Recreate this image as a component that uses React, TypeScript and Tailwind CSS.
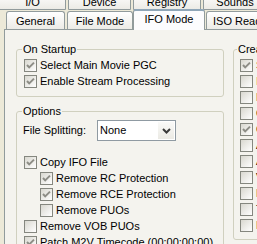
import React from "react";

function Check({ checked }: { checked?: boolean }) {
  return (
    <div className="w-[13px] h-[13px] shrink-0 border border-[#85877F] bg-linear-to-br from-[#D9D8D0] to-white">
      {checked && (
        <svg width="11" height="11" viewBox="0 0 11 11" className="block">
          <path d="M2 5 L4.2 7.4 L9 2.6" fill="none" stroke="#8D8D86" strokeWidth="2" />
        </svg>
      )}
    </div>
  );
}

function Row({ checked, label, indent }: { checked?: boolean; label: string; indent?: boolean }) {
  return (
    <div className={"flex items-center h-[13px] gap-[3px] " + (indent ? "ml-[16px]" : "")}>
      <Check checked={checked} />
      <span className="leading-[13px] whitespace-nowrap">{label}</span>
    </div>
  );
}

export default function App() {
  return (
    <div className="w-[257px] h-[244px] overflow-hidden bg-[#ECE9D8] text-[11px] text-black font-['Liberation_Sans',_Arial,_sans-serif]">
      {/* top tab row */}
      <div className="flex items-start h-[18px] mt-[-8px] ml-[-1px] gap-[2px]">
        <div className="w-[67px] h-[18px] shrink-0 border border-[#919B9C] rounded-t-[3px] bg-linear-to-b from-white to-[#ECEBE6] flex items-end justify-center pb-0 leading-[13px]">I/O</div>
        <div className="w-[63px] h-[18px] shrink-0 border border-[#919B9C] rounded-t-[3px] bg-linear-to-b from-white to-[#ECEBE6] flex items-end justify-center pb-0 leading-[13px]">Device</div>
        <div className="w-[68px] h-[18px] shrink-0 border border-[#919B9C] rounded-t-[3px] bg-linear-to-b from-white to-[#ECEBE6] flex items-end justify-center pb-0 leading-[13px]">Registry</div>
        <div className="w-[64px] h-[18px] shrink-0 border border-[#919B9C] rounded-t-[3px] bg-linear-to-b from-white to-[#ECEBE6] flex items-end justify-center pb-0 leading-[13px]">Sounds</div>
      </div>
      {/* second tab row */}
      <div className="flex items-start h-[18px] mt-[1px] ml-[6px]">
        <div className="w-[59px] h-[18px] shrink-0 border border-b-0 border-[#919B9C] rounded-t-[3px] bg-linear-to-b from-white to-[#ECEBE6] flex items-center justify-center leading-[13px] pt-[1px]">General</div>
        <div className="w-[66px] h-[18px] shrink-0 ml-[2px] border border-b-0 border-[#919B9C] rounded-t-[3px] bg-linear-to-b from-white to-[#ECEBE6] flex items-center justify-center leading-[13px] pt-[1px]">File Mode</div>
        <div className="relative z-10 w-[72px] h-[21px] mt-[-2px] shrink-0 border border-b-0 border-[#919B9C] border-t-[#8FA6B8] border-t-2 rounded-t-[3px] bg-[#FCFCFE] flex items-start justify-center leading-[13px] pt-[2px]">IFO Mode</div>
        <div className="w-[70px] h-[18px] shrink-0 ml-[1px] border border-b-0 border-[#919B9C] rounded-t-[3px] bg-linear-to-b from-white to-[#ECEBE6] flex items-center pl-[6px] leading-[13px] pt-[1px] whitespace-nowrap">ISO Read</div>
      </div>
      {/* panel */}
      <div className="ml-[4px] w-[320px] h-[260px] border border-[#919B9C] bg-[#F4F3EE] flex items-start pl-[11px] pt-[13px]">
        <div className="flex flex-col w-[208px] shrink-0">
          <fieldset className="w-[208px] min-w-0 border border-[#D0D0BF] rounded-[3px] px-[7px] pb-[8px]">
            <legend className="ml-[-2px] px-[1px] leading-[13px]">On Startup</legend>
            <div className="flex flex-col gap-[3px] pt-[3px]">
              <Row checked label="Select Main Movie PGC" />
              <Row checked label="Enable Stream Processing" />
            </div>
          </fieldset>
          <fieldset className="mt-[8px] w-[208px] min-w-0 border border-[#D0D0BF] rounded-[3px] px-[7px] pb-[8px]">
            <legend className="ml-[-2px] px-[1px] leading-[13px]">Options</legend>
            <div className="flex items-center mt-[2px] h-[21px]">
              <span className="ml-[-1px] w-[74px] leading-[13px] whitespace-nowrap">File Splitting:</span>
              <div className="w-[79px] h-[21px] border border-[#8F9AA2] bg-white flex items-center">
                <span className="pl-[2px] flex-1 leading-[13px]">None</span>
                <div className="w-[16px] h-[17px] mr-[1px] bg-linear-to-b from-[#FAFAF8] to-[#EBEAE4] flex items-center justify-center">
                  <svg width="9" height="6" viewBox="0 0 9 6">
                    <path d="M1 1 L4.5 4.5 L8 1" fill="none" stroke="#3A3A3A" strokeWidth="2" />
                  </svg>
                </div>
              </div>
            </div>
            <div className="flex flex-col gap-[3px] mt-[15px]">
              <Row checked label="Copy IFO File" />
              <Row checked indent label="Remove RC Protection" />
              <Row checked indent label="Remove RCE Protection" />
              <Row indent label="Remove PUOs" />
              <Row label="Remove VOB PUOs" />
              <Row checked label="Patch M2V Timecode (00:00:00:00)" />
            </div>
          </fieldset>
        </div>
        <fieldset className="ml-[9px] w-[90px] min-w-0 shrink-0 border border-[#D0D0BF] rounded-[3px] px-[6px] pb-[7px]">
          <legend className="ml-[-3px] px-[1px] leading-[13px] whitespace-nowrap">Create</legend>
          <div className="flex flex-col gap-[3px] pt-[3px]">
            <Row checked label="Subtitles" />
            <Row label="Info File" />
            <Row label="Log File" />
            <Row label="Chapters" />
            <Row checked label="Cells" />
            <Row label="Angles" />
            <Row label="Audio" />
            <Row label="Video" />
            <Row label="Menus" />
            <Row label="Titles" />
            <Row label="Palette" />
          </div>
        </fieldset>
      </div>
    </div>
  );
}
